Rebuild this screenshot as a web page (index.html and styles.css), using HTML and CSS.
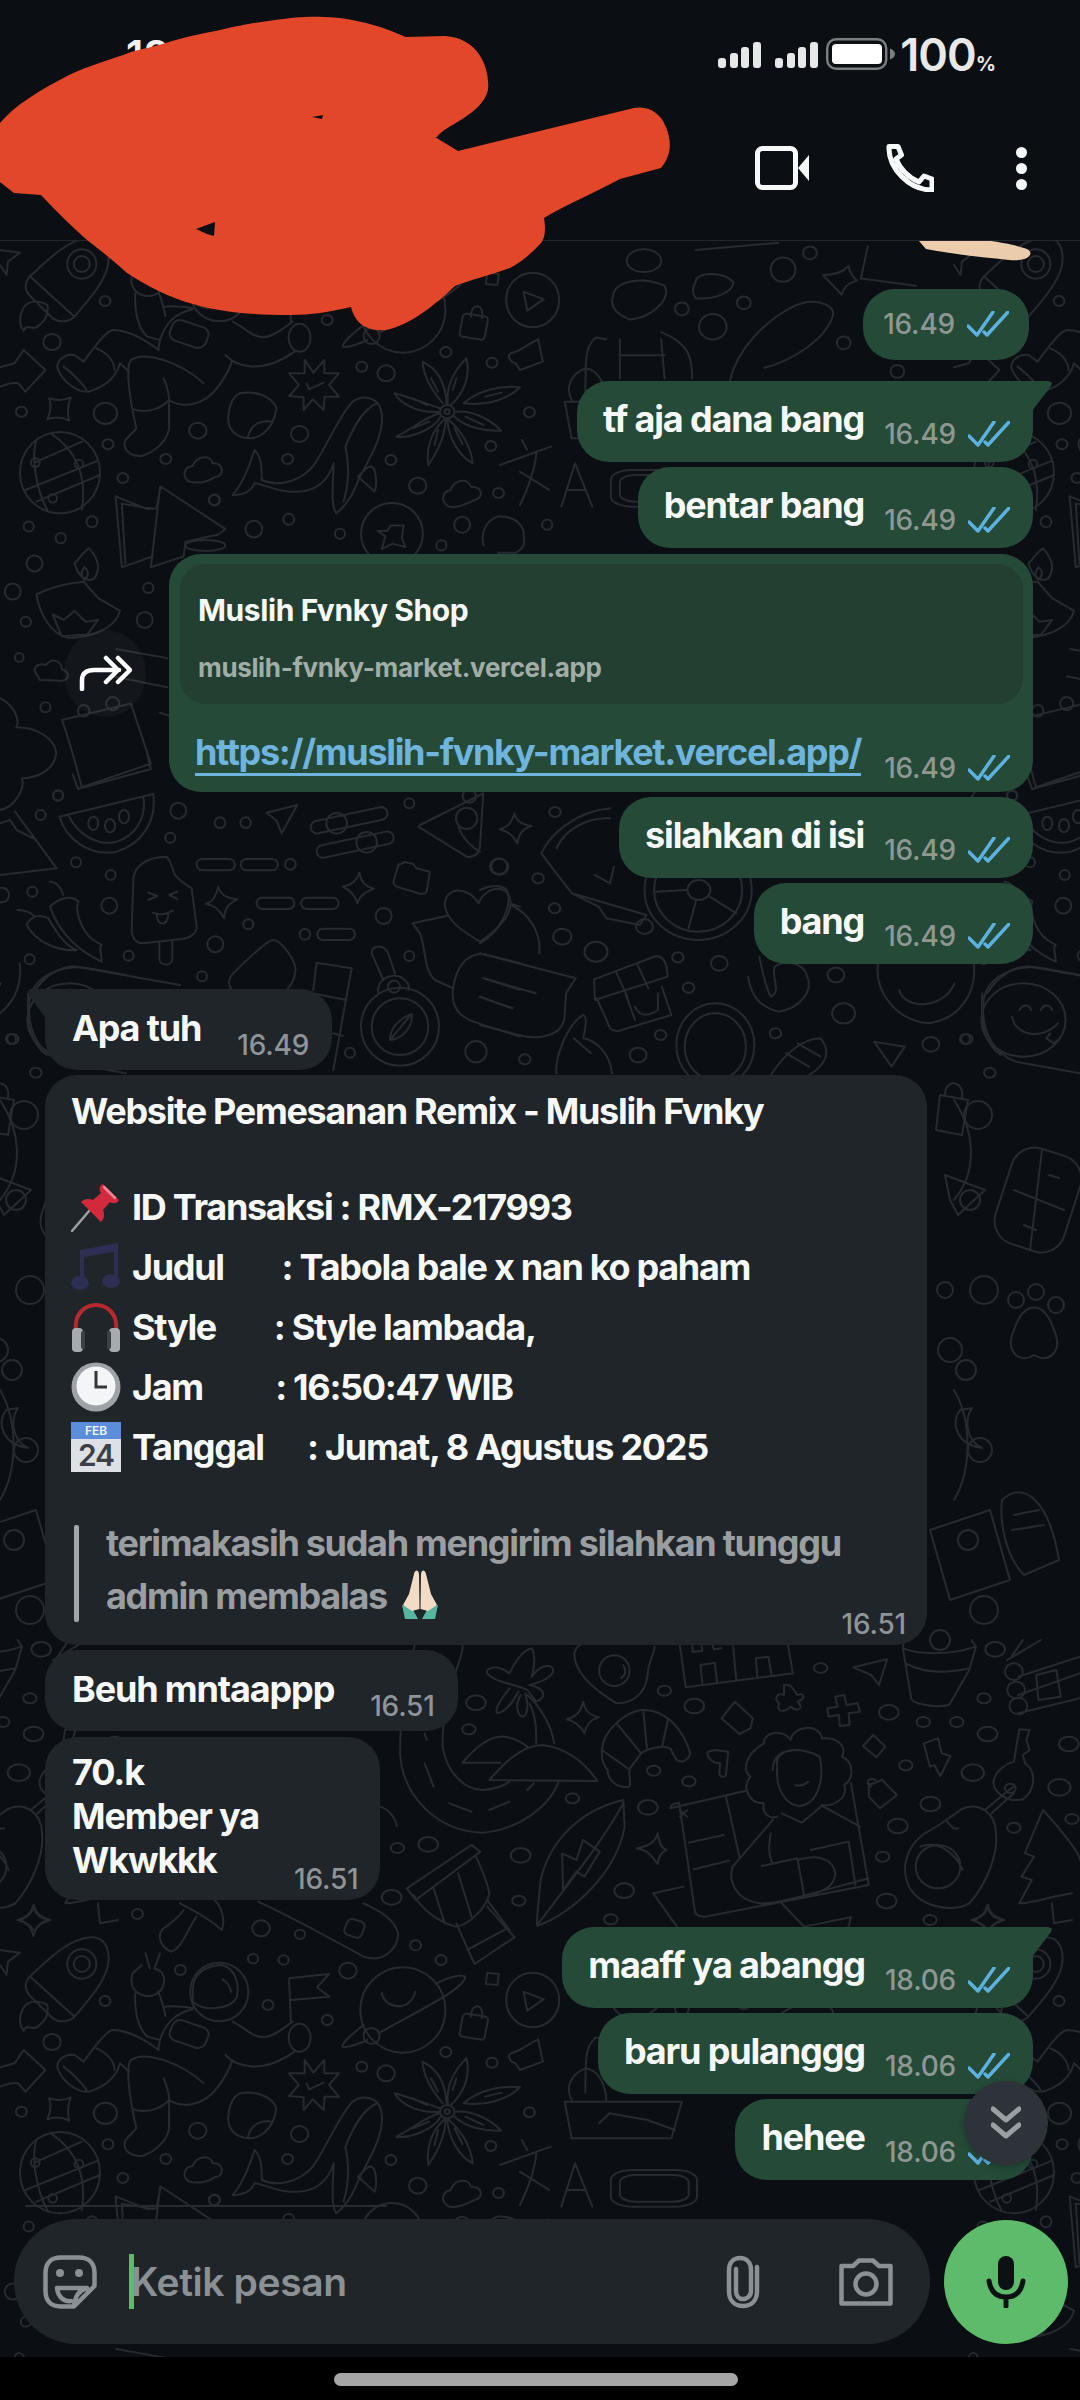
FILE: index.html
```html
<!DOCTYPE html>
<html lang="id">
<head>
<meta charset="utf-8">
<title>Chat</title>
<link rel="stylesheet" href="styles.css">
</head>
<body>
<div class="screen">
  <svg class="doodles" viewBox="0 0 1080 2400" width="1080" height="2400" aria-hidden="true">
    <defs>
      <g id="tile">
        <!-- astronaut field -->
        <g transform="translate(0,190) scale(.3636,.3333)">
          <path d="M80 262C130 210 190 145 250 142C295 140 305 190 295 235C280 290 235 340 205 380C190 395 165 400 145 385L80 315C65 295 70 275 80 262ZM85 262L205 380M130 345C100 325 70 335 62 360C50 385 55 410 65 422C75 400 85 420 100 412C125 395 135 375 130 345Z"/>
          <ellipse cx="225" cy="222" rx="40" ry="44"/><ellipse cx="225" cy="222" rx="22" ry="24"/>
          <ellipse cx="603" cy="306" rx="80" ry="88"/>
          <path d="M530 300C530 250 570 225 610 225C650 235 660 290 650 325C630 360 560 365 530 335ZM612 268C625 275 632 290 636 305M372 310C370 350 375 410 405 440L440 450M435 305C445 330 450 350 455 378M450 352C470 345 500 350 530 355M365 250C355 280 365 310 400 318C440 320 455 290 450 260C445 235 425 240 425 235L440 190M400 190L412 235M390 225L365 250M435 480L440 450C455 400 480 370 530 358M640 395C670 410 690 440 725 442C755 440 785 410 805 395M620 495C650 530 720 555 810 485M437 480C400 450 350 420 310 420C290 425 260 470 230 515L205 495C180 490 155 510 158 535C170 570 210 610 245 605C290 590 320 560 330 520L355 545M175 530C200 550 235 590 240 605M265 475C300 490 315 520 315 540M360 510C345 530 355 620 375 715L345 750C335 780 360 800 390 798C430 785 460 750 465 715L465 625M360 510C400 480 500 520 560 580M450 565C460 590 465 610 465 630C500 655 560 650 600 590C620 560 630 540 638 515M365 658C400 670 440 660 465 630"/>
          <ellipse cx="824" cy="443" rx="30" ry="42"/>
          <rect x="468" y="400" width="104" height="64" rx="22" transform="rotate(20 520 432)"/>
          <path d="M800 395L795 265L905 252L872 292L905 320L800 330"/>
          <ellipse cx="1108" cy="360" rx="117" ry="128"/>
          <path d="M1050 310C1060 360 1130 365 1142 305M1200 280C1230 262 1275 250 1280 262C1270 295 1210 330 1040 430M1000 405C970 430 940 460 942 470C960 475 990 460 1010 450"/>
          <ellipse cx="1022" cy="438" rx="22" ry="24"/>
          <rect x="1268" y="375" width="70" height="70" rx="10" transform="rotate(10 1303 410)"/>
          <path d="M1295 380C1295 335 1335 340 1325 385"/>
          <ellipse cx="1465" cy="330" rx="73" ry="82"/>
          <path d="M1440 305L1495 328L1450 362ZM1340 248L1372 252L1368 285L1336 282ZM1405 490C1440 480 1445 465 1480 448L1493 515L1430 540L1418 520C1400 515 1395 495 1405 490Z"/>
          <path d="M838 510L862 548L892 510L892 550L932 550L905 585L932 620L893 620L890 660L860 628L835 660L835 622L795 618L822 585L795 550L838 550ZM843 580L850 598L890 578"/>
          <path d="M660 610C700 600 750 620 760 655C755 700 730 740 690 745C650 745 625 720 628 680C630 650 640 620 660 610ZM682 742C690 700 720 690 750 695"/>
          <ellipse cx="1230" cy="665" rx="20" ry="20"/><ellipse cx="1230" cy="665" rx="7" ry="7"/>
          <path d="M1218 640C1190 605 1165 560 1162 515C1200 535 1225 570 1228 640M1232 640C1225 590 1250 540 1283 505C1295 560 1275 610 1240 645M1275 640C1315 600 1380 585 1430 592C1400 625 1340 650 1275 640M1255 665C1300 660 1350 690 1378 722C1330 725 1280 710 1250 680M1235 690C1270 725 1295 770 1300 820C1265 800 1235 750 1230 690M1225 690C1225 740 1200 790 1178 825C1170 770 1190 720 1222 688M1210 670C1170 680 1130 720 1090 740C1130 745 1190 720 1212 680M1210 655C1170 640 1120 620 1085 610C1105 650 1165 670 1205 665M1185 565L1205 605M1255 565L1245 600M1335 620L1380 608M1280 680L1330 705M1250 715L1272 762M1205 720L1195 765M1135 715L1180 695M1135 625L1175 645"/>
          <path d="M640 915C660 890 680 850 700 780C720 800 720 840 720 870C760 890 820 880 860 830C900 770 930 680 970 635C1000 610 1040 625 1048 660C1060 720 1030 780 990 860C975 900 960 940 925 970C910 950 915 890 918 820C900 880 860 910 800 905C760 905 720 880 700 880C690 905 670 915 640 915ZM1035 640C1000 660 975 700 950 770C960 820 960 880 945 935M985 860C1010 830 1020 820 1030 840C1040 880 1030 905 1030 905Z"/>
          <path d="M520 875C500 860 505 830 530 828C540 795 580 795 585 820C615 815 620 860 590 862C565 880 540 880 520 875ZM1235 950C1210 935 1215 905 1240 900C1250 865 1290 865 1295 890C1330 890 1330 925 1305 930C1280 945 1255 955 1235 950Z"/>
          <ellipse cx="165" cy="848" rx="110" ry="122"/>
          <path d="M95 818L225 755M70 900L270 812M100 935L275 855M100 750C85 800 100 900 130 960M140 730C210 780 240 860 225 960"/>
          <ellipse cx="97" cy="818" rx="12" ry="13"/><ellipse cx="217" cy="822" rx="12" ry="13"/><ellipse cx="145" cy="925" rx="12" ry="13"/>
          <path d="M135 625C155 632 175 632 195 622C185 645 185 665 190 692C170 680 150 680 130 688C140 665 142 645 135 625ZM92 45C97 75 110 85 135 90C110 97 98 110 92 138C85 110 75 97 48 90C75 85 87 70 92 45ZM0 532L40 520L65 480L125 540L70 605L50 580C30 575 15 585 0 590M0 180L55 188L22 215L18 255L0 225"/>
          <path d="M1375 825L1515 770M1435 750L1450 780M1475 790C1470 850 1450 900 1430 945M1430 845L1510 900"/>
          <g class="rings">
            <circle cx="378" cy="72" r="15"/><circle cx="718" cy="115" r="24"/><circle cx="825" cy="133" r="14"/><circle cx="1143" cy="166" r="15"/><circle cx="1213" cy="210" r="15"/><circle cx="696" cy="206" r="14"/><circle cx="780" cy="210" r="14"/><circle cx="496" cy="240" r="15"/><circle cx="957" cy="242" r="24"/><circle cx="289" cy="333" r="15"/><circle cx="737" cy="345" r="15"/><circle cx="900" cy="390" r="15"/><circle cx="143" cy="456" r="24"/><circle cx="1226" cy="486" r="15"/><circle cx="995" cy="530" r="15"/><circle cx="1062" cy="550" r="24"/><circle cx="1353" cy="518" r="15"/><circle cx="59" cy="665" r="15"/><circle cx="290" cy="670" r="32"/><circle cx="544" cy="722" r="24"/><circle cx="824" cy="732" r="24"/><circle cx="1456" cy="667" r="15"/><circle cx="297" cy="763" r="15"/><circle cx="456" cy="807" r="15"/><circle cx="791" cy="807" r="15"/><circle cx="1075" cy="810" r="15"/><circle cx="1350" cy="768" r="15"/><circle cx="338" cy="864" r="15"/><circle cx="1149" cy="887" r="24"/><circle cx="1371" cy="909" r="15"/><circle cx="589" cy="930" r="15"/>
          </g>
          <path d="M540 80C510 130 500 175 470 185C440 170 430 135 450 115C470 100 490 85 505 60M495 40C540 65 590 100 610 120C620 90 610 50 590 30M710 35C800 80 900 140 1000 200C1050 220 1095 180 1095 130C1085 90 1050 65 1000 40M1255 100L1305 222L1415 142L1340 50M1285 180L1395 115"/>
          <rect x="950" y="90" width="50" height="50" rx="14" transform="rotate(20 975 115)"/>
        </g>
        <!-- book, lamp, calendar field -->
        <g transform="translate(0,240) scale(.3636)">
          <path d="M318 705L405 740L430 738L442 678L620 795L600 810L510 830L505 870L415 900L440 680M318 705L335 900L420 870M335 725L420 740M335 725L345 890"/>
          <ellipse cx="565" cy="840" rx="55" ry="15"/>
          <circle cx="1078" cy="808" r="85"/>
          <path d="M1075 785L1110 785L1105 820L1115 845L1080 835L1050 850L1060 815L1038 800L1065 800Z"/>
          <path d="M1330 840C1320 800 1340 770 1370 760C1400 760 1430 770 1440 800C1440 830 1450 840 1420 860L1370 860"/>
          <path d="M100 975C130 960 170 945 230 940L270 985L330 1020C320 1060 270 1090 190 1095C140 1085 110 1030 100 975ZM205 890C225 865 240 850 245 848C265 870 280 900 260 930C240 945 215 925 205 890ZM232 900C220 915 225 930 232 935C245 925 245 910 232 900ZM145 1030L175 1045L205 1020L235 1050L270 1045L240 1085L170 1090Z"/>
          <path d="M170 1320L360 1275L415 1440L225 1505C210 1450 190 1370 170 1320ZM200 1470L215 1510L415 1455L405 1415"/>
          <circle cx="230" cy="1295" r="16"/><circle cx="310" cy="1275" r="18"/>
          <path d="M0 1260C40 1280 55 1320 45 1340C100 1340 150 1370 155 1410C150 1460 100 1480 60 1480C70 1510 40 1560 0 1568M95 1185C95 1165 120 1165 125 1170C145 1145 170 1160 170 1180C195 1190 190 1210 170 1212L110 1210Z"/>
          <path d="M320 1125L460 1150M310 1200L460 1230M440 1300L470 1310"/>
          <g class="rings">
            <circle cx="253" cy="775" r="15"/><circle cx="79" cy="788" r="14"/><circle cx="167" cy="820" r="14"/><circle cx="95" cy="890" r="22"/><circle cx="35" cy="967" r="22"/><circle cx="408" cy="957" r="14"/><circle cx="71" cy="1050" r="14"/><circle cx="398" cy="1045" r="22"/><circle cx="53" cy="1148" r="12"/><circle cx="125" cy="1285" r="14"/><circle cx="590" cy="715" r="15"/><circle cx="698" cy="795" r="23"/><circle cx="794" cy="768" r="15"/><circle cx="935" cy="808" r="14"/><circle cx="1271" cy="783" r="22"/><circle cx="1214" cy="840" r="14"/><circle cx="1505" cy="783" r="14"/><circle cx="160" cy="1527" r="14"/>
          </g>
        </g>
        <!-- watermelon, popsicle, compass field -->
        <g transform="translate(0,790) scale(.3333)">
          <path d="M178 80L460 12C470 90 430 160 350 185C270 200 200 150 178 80ZM205 75C230 130 290 170 350 155C410 135 440 80 430 20M45 65L170 235L0 255M0 100L30 90L50 120L100 145"/>
          <ellipse cx="280" cy="100" rx="15" ry="20"/><ellipse cx="330" cy="107" rx="15" ry="20"/><ellipse cx="372" cy="80" rx="15" ry="20"/>
          <path d="M800 68L892 45L845 130L830 92Z"/>
          <rect x="930" y="72" width="235" height="38" rx="19" transform="rotate(-12 1047 91)"/><circle cx="1010" cy="100" r="31"/>
          <rect x="948" y="145" width="235" height="38" rx="19" transform="rotate(-12 1065 164)"/><circle cx="1100" cy="157" r="31"/>
          <path d="M1255 110L1400 200C1430 205 1440 180 1440 170L1450 10L1260 105M1375 110C1390 150 1420 175 1440 185"/>
          <circle cx="1400" cy="85" r="32"/><circle cx="1408" cy="18" r="20"/>
          <path d="M400 270C400 230 440 200 500 200L510 215L525 255L545 275L575 295L590 410C590 430 570 445 540 448L430 460C405 460 395 440 395 420ZM478 458L478 505C480 530 515 530 517 505L517 452M445 308L472 318L445 330M532 305L508 315L532 327M458 368C480 375 495 375 518 362M470 372C470 410 505 410 505 370"/>
          <path d="M150 350C170 330 210 310 235 335C225 360 240 420 280 450L305 465C295 470 305 490 305 515C250 490 180 440 150 350ZM150 275C175 275 185 300 190 315M80 405C90 380 120 370 145 385C170 430 200 470 230 480C180 485 110 460 80 405ZM52 360C80 360 95 370 105 380"/>
          <rect x="590" y="207" width="115" height="34" rx="17"/><rect x="722" y="207" width="112" height="34" rx="17"/><rect x="770" y="323" width="113" height="34" rx="17"/><rect x="903" y="323" width="113" height="34" rx="17"/><rect x="952" y="416" width="113" height="34" rx="17"/>
          <path d="M655 290C660 315 680 325 712 328C685 340 675 355 672 385C660 360 645 345 618 342C640 335 650 315 655 290ZM1078 248C1082 275 1095 290 1122 296C1098 305 1080 315 1072 340C1065 315 1050 300 1028 290C1055 285 1072 270 1078 248Z"/>
          <path d="M1195 225L1215 216L1240 222L1250 235L1290 245L1280 305C1275 313 1265 313 1255 310L1190 290C1180 285 1180 275 1182 270Z"/>
          <path d="M1435 340C1405 285 1330 290 1335 350C1345 400 1400 430 1440 455C1485 425 1535 380 1532 335C1525 280 1460 285 1435 340M1340 378L1238 400L1260 430C1280 480 1270 540 1305 570L1360 595M1535 342L1560 350"/>
          <path d="M820 450C800 450 720 530 695 555C680 575 690 600 705 610M820 450C840 450 880 500 885 530C890 550 880 580 860 600"/>
          <path d="M100 610C130 560 180 525 230 530L540 585M85 610C80 700 90 760 140 795M950 518L1055 535L1000 840M950 518L940 600M1040 630L935 610M1000 730L1030 738"/>
          <circle cx="1200" cy="710" r="117"/><circle cx="1200" cy="710" r="85"/>
          <path d="M1235 672C1190 690 1170 720 1170 750C1210 745 1240 710 1235 672ZM1170 750L1235 672M1135 610C1130 570 1165 550 1200 560C1225 575 1230 590 1225 600M1115 490C1115 465 1150 460 1165 490L1185 550M1115 490L1150 570"/>
          <circle cx="1182" cy="590" r="18"/>
          <path d="M1560 520L1450 492C1400 490 1370 530 1360 590C1350 650 1380 680 1420 695L1560 740M1450 565L1560 600M1438 620L1535 655"/>
          <g class="rings">
            <circle cx="174" cy="17" r="15"/><circle cx="122" cy="75" r="15"/><circle cx="535" cy="62" r="24"/><circle cx="660" cy="98" r="16"/><circle cx="737" cy="98" r="16"/><circle cx="511" cy="143" r="15"/><circle cx="228" cy="217" r="15"/><circle cx="332" cy="255" r="15"/><circle cx="97" cy="305" r="15"/><circle cx="328" cy="347" r="24"/><circle cx="745" cy="403" r="15"/><circle cx="646" cy="463" r="24"/><circle cx="89" cy="508" r="15"/><circle cx="386" cy="497" r="15"/><circle cx="606" cy="559" r="15"/><circle cx="33" cy="747" r="15"/><circle cx="871" cy="223" r="16"/><circle cx="1228" cy="40" r="15"/><circle cx="1151" cy="378" r="24"/><circle cx="1498" cy="229" r="24"/><circle cx="915" cy="433" r="16"/><circle cx="1228" cy="498" r="15"/><circle cx="1050" cy="788" r="15"/><circle cx="1428" cy="785" r="32"/><circle cx="5" cy="315" r="22"/>
          </g>
        </g>
        <!-- wheel, shop, coin field -->
        <g transform="translate(480,790) scale(.3827,.3333)">
          <path d="M90 70C95 95 110 105 135 108C110 115 100 135 98 160C85 135 75 125 52 118C75 110 85 95 90 70Z"/>
          <ellipse cx="570" cy="300" rx="140" ry="150"/><ellipse cx="570" cy="300" rx="115" ry="125"/><ellipse cx="572" cy="300" rx="30" ry="30"/>
          <path d="M545 415L565 330M670 370L600 320M460 305L540 300M160 190L240 310L435 375L418 405L330 385L310 350L240 310M160 190C185 130 250 65 340 55M200 175C220 120 280 80 340 85M300 255L340 280L350 230"/>
          <circle cx="430" cy="410" r="22"/>
          <path d="M0 460C60 420 85 340 70 300C50 280 20 290 0 300M80 345C130 370 160 430 155 490M0 490L250 565L225 610L220 690C210 740 150 750 100 735L0 705M10 565L145 610M0 620L85 655"/>
          <path d="M298 568L460 498C480 500 490 520 490 560L300 630ZM355 545L385 620M410 520L440 595M305 625L340 715C350 725 360 725 370 720L500 675L475 590M380 610L405 690M405 650C415 680 440 680 465 660L465 610"/>
          <path d="M700 560C710 620 730 650 780 665C840 655 870 600 855 560C850 530 810 500 770 530C760 570 790 600 760 620C745 590 735 530 730 500"/>
          <ellipse cx="615" cy="765" rx="102" ry="125"/><ellipse cx="615" cy="770" rx="80" ry="100"/>
          <path d="M200 850C195 800 230 700 270 675C285 680 270 740 270 745C300 750 340 790 345 850M245 745L290 790M760 855C790 800 840 745 890 745C915 780 910 820 860 855M800 790L860 830M830 760L890 800"/>
          <path d="M1030 755L1110 770L1075 830ZM1040 520C1030 610 1090 690 1170 700C1250 690 1300 610 1290 520M1095 600C1110 660 1210 660 1240 580"/>
          <g class="rings">
            <circle cx="196" cy="66" r="15"/><circle cx="50" cy="230" r="24"/><circle cx="152" cy="265" r="15"/><circle cx="195" cy="355" r="15"/><circle cx="215" cy="440" r="24"/><circle cx="303" cy="485" r="30"/><circle cx="517" cy="502" r="15"/><circle cx="625" cy="520" r="22"/><circle cx="545" cy="593" r="15"/><circle cx="930" cy="555" r="22"/><circle cx="950" cy="670" r="30"/><circle cx="472" cy="735" r="15"/><circle cx="772" cy="730" r="15"/><circle cx="117" cy="808" r="15"/><circle cx="1178" cy="763" r="22"/><circle cx="413" cy="795" r="22"/>
          </g>
        </g>
        <!-- smiley that wraps round the tile edge -->
        <g transform="translate(-474,790) scale(.3827,.3333)">
          <path d="M1315 640C1320 560 1400 520 1470 535L1568 555M1315 640C1310 720 1340 790 1400 815L1568 850M1390 680C1400 740 1470 750 1510 700M1410 660C1420 640 1435 645 1440 660M1465 660C1475 640 1490 645 1495 660M1490 730L1480 745L1500 760L1515 745"/>
          <ellipse cx="1420" cy="690" rx="110" ry="110"/>
          <circle cx="1272" cy="747" r="15"/><circle cx="1332" cy="848" r="15"/>
        </g>
        <!-- palm, woman, avocado field -->
        <g transform="translate(380,1640) scale(.4464,.3333)">
          <path d="M330 150C300 130 260 130 240 100C235 85 260 70 290 100C300 70 320 30 340 25C350 50 345 85 340 110C360 70 390 70 388 95C380 120 350 130 335 135C370 145 375 170 350 185L330 150M290 145C275 170 255 205 262 220C285 215 300 180 310 155M315 165C300 200 310 230 322 230C335 215 330 180 325 160M330 165C360 200 385 260 390 310M335 190C350 230 350 270 350 310"/>
          <path d="M185 368C215 320 250 285 280 290C300 295 320 310 330 320M185 368L270 368M245 420C280 365 320 315 365 315C420 325 460 370 487 423Z"/>
          <path d="M45 340C50 470 130 575 230 578C310 570 380 500 400 425M185 15C190 60 140 130 140 320C150 400 190 450 230 450C260 448 280 435 290 425M100 370L120 440M155 490L205 515M245 510L290 485M330 450L345 430M100 280L105 300M45 340C45 200 60 120 80 0"/>
          <path d="M435 40C435 100 480 150 530 190C560 190 595 170 600 100C600 70 615 40 615 20M435 40C440 20 445 15 450 15M545 75C552 90 550 105 540 115"/>
          <ellipse cx="525" cy="92" rx="34" ry="46"/>
          <path d="M455 185C460 215 470 225 490 232C470 240 462 255 458 280C450 260 440 245 418 238C440 230 450 215 455 185Z"/>
          <path d="M585 210C640 205 680 270 695 340C690 365 670 375 660 350L650 325C630 315 600 325 585 340L560 385C555 405 565 430 558 440C530 445 510 420 510 390C490 360 495 310 510 280C530 240 560 215 585 210ZM530 250L585 340M590 215L598 325M645 240L632 320M497 330L555 385"/>
          <path d="M670 0L685 142L925 100L912 0M722 130L718 75L750 68L755 125M845 110L842 55L870 50L877 105M790 0L798 120M700 15L700 35L722 33L720 15M745 15L748 28L765 25"/>
          <path d="M1060 82L1136 58L1118 135L1100 105ZM1172 25C1210 45 1280 45 1335 20M1172 0L1172 30L1190 175C1190 190 1240 205 1275 195L1320 90L1335 20L1325 0M1180 72C1220 100 1270 100 1320 85"/>
          <path d="M1405 60L1480 0M1430 110L1568 50M1430 165L1568 100M1430 220L1568 175M1470 105L1515 90L1525 170L1475 180ZM1415 50L1440 0"/>
          <ellipse cx="1420" cy="95" rx="20" ry="25"/><ellipse cx="1425" cy="150" rx="20" ry="25"/><ellipse cx="1430" cy="198" rx="20" ry="25"/>
          <path d="M905 135C925 130 930 160 935 165C950 155 955 175 935 185C950 200 940 220 920 200C905 220 885 215 895 190C880 180 890 155 905 165ZM1020 170L1040 165L1045 195L1070 190L1075 215L1050 220L1052 255L1030 258L1028 225L1005 230L1002 205L1025 200ZM795 185L835 235L830 265L805 282L765 235ZM1105 285L1132 320L1112 352L1082 318ZM1218 310L1250 295L1258 340L1278 348L1255 408L1242 375L1232 380Z"/>
          <path d="M1432 268L1455 270L1448 300L1455 330L1440 345L1445 370C1470 390 1470 450 1440 478C1400 490 1370 450 1375 420C1380 390 1405 370 1420 365ZM1095 435L1125 420L1158 465L1120 505L1095 470ZM1100 440C1085 430 1095 410 1110 420M750 330L780 335L775 405C770 415 760 410 760 400L762 370C740 370 730 345 735 335Z"/>
          <path d="M860 310C860 275 900 265 920 300C925 255 985 250 990 295C1030 290 1045 325 1035 350C1065 370 1060 420 1040 435C1050 480 1010 500 990 495M860 310C820 340 810 390 830 410C810 440 825 490 860 490C855 515 870 540 890 530M890 380C880 320 950 320 985 350C995 410 985 490 940 498C910 495 885 450 890 380ZM880 390C880 350 900 330 935 330M930 435C940 440 950 435 960 425"/>
          <path d="M650 505L820 452M650 505C650 495 660 490 670 488L705 810C705 825 715 830 730 830L1095 735L1055 430M775 470L805 650M692 608L770 585M703 688L782 662M672 510L688 530M688 510L672 530M880 540L790 680C780 720 795 780 850 790C880 795 940 770 1095 715M900 520L945 548L990 497L1075 560M855 678L935 655L950 765M965 630L1050 605L1065 735M935 660C985 640 1015 660 1020 700C1020 730 1000 760 945 768M875 580C870 620 870 650 880 670M612 760L680 740M612 760L665 860M900 790L950 860L1055 832L1050 860"/>
          <path d="M545 480C450 510 380 600 360 720C355 790 350 840 352 858C430 820 530 700 548 560ZM545 490C500 600 440 700 355 850M408 640L440 660L455 600L492 635L458 710L440 695L410 750ZM622 580C625 610 630 625 642 630C625 640 625 655 622 672C610 650 600 630 575 625C600 620 618 605 622 580Z"/>
          <path d="M1300 510C1340 480 1380 520 1380 580C1385 640 1360 730 1320 790C1280 820 1210 800 1185 740C1165 680 1180 620 1220 580C1250 560 1270 540 1300 510ZM1210 620C1250 600 1290 640 1305 690M1270 545C1280 560 1285 570 1295 565M1355 510L1400 460L1420 440M1370 520L1420 460"/>
          <ellipse cx="1250" cy="680" rx="50" ry="65"/><ellipse cx="1412" cy="445" rx="12" ry="14"/>
          <path d="M1485 510C1520 560 1568 640 1568 660M1485 510C1470 560 1450 620 1445 640L1465 650L1437 710L1460 720L1432 790C1460 790 1500 770 1550 760M1505 790L1510 850L1550 840M1362 795C1365 820 1375 830 1398 840C1380 850 1370 855 1365 870M1362 795C1358 820 1350 830 1330 840C1345 850 1355 855 1360 870"/>
          <path d="M60 745L205 615L225 635L80 780ZM75 765C100 820 140 850 170 860C200 855 240 800 245 760C240 720 225 680 215 650M120 745L145 850M175 700L205 830M240 780L290 870M0 500C25 510 35 540 38 558"/>
          <g class="rings">
            <circle cx="215" cy="188" r="22"/><circle cx="637" cy="152" r="15"/><circle cx="704" cy="198" r="22"/><circle cx="987" cy="84" r="15"/><circle cx="1140" cy="217" r="22"/><circle cx="1378" cy="28" r="22"/><circle cx="1353" cy="175" r="15"/><circle cx="1217" cy="246" r="15"/><circle cx="1292" cy="246" r="15"/><circle cx="1361" cy="282" r="22"/><circle cx="1543" cy="312" r="22"/><circle cx="199" cy="268" r="15"/><circle cx="613" cy="392" r="15"/><circle cx="692" cy="424" r="15"/><circle cx="431" cy="475" r="15"/><circle cx="600" cy="502" r="22"/><circle cx="1178" cy="376" r="15"/><circle cx="1328" cy="398" r="25"/><circle cx="1522" cy="442" r="25"/><circle cx="1233" cy="492" r="22"/><circle cx="1420" cy="563" r="15"/><circle cx="1160" cy="558" r="22"/><circle cx="1126" cy="650" r="15"/><circle cx="39" cy="624" r="15"/><circle cx="108" cy="613" r="22"/><circle cx="315" cy="646" r="22"/><circle cx="311" cy="782" r="15"/><circle cx="26" cy="772" r="22"/><circle cx="547" cy="752" r="22"/><circle cx="517" cy="838" r="15"/><circle cx="1135" cy="783" r="22"/><circle cx="1550" cy="537" r="15"/><circle cx="1232" cy="840" r="15"/>
          </g>
        </g>
        <!-- woman, koi and cactus between the bubbles -->
        <g transform="scale(.6887,.3571)">
          <path d="M890 830C890 790 930 770 965 800C975 840 945 890 915 895C895 880 885 860 890 830ZM880 950L865 945C850 970 850 1000 850 1100M900 950L900 1060M960 950L965 1060M900 995L965 995M960 930C1000 960 1005 1000 1005 1060"/>
          <ellipse cx="935" cy="730" rx="25" ry="32"/>
          <path d="M1060 1065C1070 980 1110 900 1150 860C1180 830 1210 850 1210 880C1200 950 1150 1010 1110 1030M1195 770C1215 770 1225 760 1232 745C1235 770 1240 780 1245 785C1230 795 1225 805 1222 825C1210 800 1205 790 1195 770ZM1010 790C1010 760 1050 760 1065 790C1065 820 1035 840 1010 835C1005 820 1005 805 1010 790ZM1010 700L1130 680M1260 690L1250 780L1330 800"/>
          <ellipse cx="1137" cy="755" rx="18" ry="34"/><ellipse cx="1176" cy="708" rx="10" ry="18"/><ellipse cx="1080" cy="848" rx="10" ry="18"/><ellipse cx="1035" cy="915" rx="20" ry="36"/><ellipse cx="990" cy="865" rx="10" ry="18"/><ellipse cx="1225" cy="960" rx="10" ry="18"/><ellipse cx="1303" cy="1040" rx="10" ry="18"/>
        </g>
        <g transform="translate(0,200) scale(.6887,.3333)">
          <path d="M815 920L835 790L860 920M825 870L850 870M820 605L990 605L975 715L830 715ZM870 670L885 640L940 660L980 690M830 600C820 560 830 520 850 505C870 510 880 560 880 600"/>
          <rect x="887" y="810" width="125" height="110" rx="30"/>
          <rect x="900" y="825" width="100" height="80" rx="22"/>
        </g>
        <!-- right strip of the tile, seen past the right edge -->
        <g>
          <rect x="48" y="1150" width="72" height="100" rx="24" transform="rotate(18 84 1200)"/>
          <path d="M60 1190L110 1210M88 1150L76 1250M95 1175L105 1178M70 1225L82 1230"/>
          <path d="M60 1330C70 1300 90 1300 100 1330C110 1350 95 1365 80 1355C65 1365 50 1350 60 1330Z"/>
          <circle cx="62" cy="1300" r="8"/><circle cx="82" cy="1292" r="8"/><circle cx="102" cy="1305" r="8"/>
          <path d="M48 1500C70 1480 95 1500 105 1560L70 1575C55 1560 45 1530 48 1500ZM60 1515L85 1510M58 1530L90 1525"/>
          <circle cx="24" cy="1115" r="14"/><circle cx="16" cy="1200" r="10"/><circle cx="30" cy="1290" r="14"/><circle cx="12" cy="1370" r="10"/><circle cx="26" cy="1450" r="12"/><circle cx="14" cy="1540" r="10"/><circle cx="30" cy="1610" r="14"/>
          <path d="M0 1100C20 1130 25 1170 0 1200M0 1390C18 1420 18 1470 0 1500"/>
          <path d="M940 1095L968 1100L962 1135L936 1130ZM945 1095C945 1078 965 1080 962 1098M945 1175L985 1190L958 1215L950 1200ZM960 1410C950 1425 958 1445 982 1448C966 1440 964 1420 972 1408ZM930 1530L990 1510L1010 1580L950 1600Z"/>
          <circle cx="945" cy="1290" r="8"/><circle cx="950" cy="1350" r="12"/><circle cx="940" cy="1640" r="10"/>
        </g>
      </g>
    </defs>
    <use href="#tile"/>
    <use href="#tile" x="954"/>
    <use href="#tile" x="-954"/>
    <use href="#tile" y="1700"/>
    <use href="#tile" x="954" y="1700"/>
    <use href="#tile" x="-954" y="1700"/>
    <path d="M26 2206H386"/>
  </svg>

  <header class="topbar">
    <div class="status">
      <span class="clock">18.06</span>
      <div class="status-right">
        <svg class="signal" viewBox="0 0 43 26" width="43" height="26"><rect x="0" y="16" width="8" height="10" rx="3"/><rect x="12" y="11" width="8" height="15" rx="3"/><rect x="23" y="5" width="8" height="21" rx="3"/><rect x="35" y="0" width="8" height="26" rx="3"/></svg>
        <svg class="signal second" viewBox="0 0 43 26" width="43" height="26"><rect x="0" y="16" width="8" height="10" rx="3"/><rect x="12" y="11" width="8" height="15" rx="3"/><rect x="23" y="5" width="8" height="21" rx="3"/><rect x="35" y="0" width="8" height="26" rx="3"/></svg>
        <svg class="battery" viewBox="0 0 70 32" width="70" height="32"><rect class="battery-shell" x="1.2" y="1.2" width="59" height="29.6" rx="9"/><rect class="battery-fill" x="6" y="6" width="50" height="20" rx="4"/><path class="battery-nub" d="M64 10.5c3 1 5 3 5 5.500s-2 4.500-5 5.500z"/></svg>
        <span class="level">100<small>%</small></span>
      </div>
    </div>
    <div class="appbar">
      <svg class="ic-video" viewBox="0 0 54 44" width="54" height="44"><rect class="white-line" x="2.500" y="2.500" width="38" height="39" rx="5"/><path class="white-fill" d="M43 22L54 9V35Z"/></svg>
      <svg class="ic-phone" viewBox="0 0 48 48" width="48" height="48"><path class="white-line" d="M3 2.500H12L15.500 11L10 15C14 25 23 34 33 38L38 32L46 35V46C24 46 2 25 3 2.500Z"/></svg>
      <svg class="ic-dots" viewBox="0 0 11 43" width="11" height="43"><circle cx="5.500" cy="5.500" r="5.500"/><circle cx="5.500" cy="21.500" r="5.500"/><circle cx="5.500" cy="37.500" r="5.500"/></svg>
    </div>
  </header>

  <main class="chat">
    <div class="messages">
      <div class="sticker-tail">
        <svg viewBox="0 0 115 20" width="115" height="20"><path d="M0 0L7 8C32 13 62 16 90 19C110 21 116 12 108 8C92 3 85 2 72 0Z"/></svg>
      </div>
      <div class="bubble out caption"><div class="meta"><span class="time">16.49</span><svg class="ticks" viewBox="0 0 42 26" width="42" height="26"><path d="M1 15L10 24L26 1M17 21L20 24L41 1"/></svg></div></div>
      <div class="bubble out tail gap-md"><span class="text">tf aja dana bang</span><div class="meta"><span class="time">16.49</span><svg class="ticks" viewBox="0 0 42 26" width="42" height="26"><path d="M1 15L10 24L26 1M17 21L20 24L41 1"/></svg></div></div>
      <div class="bubble out"><span class="text">bentar bang</span><div class="meta"><span class="time">16.49</span><svg class="ticks" viewBox="0 0 42 26" width="42" height="26"><path d="M1 15L10 24L26 1M17 21L20 24L41 1"/></svg></div></div>
      <div class="link-row">
        <div class="forward"><svg viewBox="0 0 53 36" width="53" height="36"><path d="M3 34V25C3 18 8 15 15 15H40M27 3L39 15L27 27M39 3L51 15L39 27"/></svg></div>
        <div class="link-bubble">
          <div class="preview">
            <div class="preview-title">Muslih Fvnky Shop</div>
            <div class="preview-domain">muslih-fvnky-market.vercel.app</div>
          </div>
          <div class="link-line">
            <span class="url">https://muslih-fvnky-market.vercel.app/</span>
            <div class="meta"><span class="time">16.49</span><svg class="ticks" viewBox="0 0 42 26" width="42" height="26"><path d="M1 15L10 24L26 1M17 21L20 24L41 1"/></svg></div>
          </div>
        </div>
      </div>
      <div class="bubble out"><span class="text">silahkan di isi</span><div class="meta"><span class="time">16.49</span><svg class="ticks" viewBox="0 0 42 26" width="42" height="26"><path d="M1 15L10 24L26 1M17 21L20 24L41 1"/></svg></div></div>
      <div class="bubble out"><span class="text">bang</span><div class="meta"><span class="time">16.49</span><svg class="ticks" viewBox="0 0 42 26" width="42" height="26"><path d="M1 15L10 24L26 1M17 21L20 24L41 1"/></svg></div></div>

      <div class="bubble in tail gap-lg"><span class="text">Apa tuh</span><div class="meta"><span class="time">16.49</span></div></div>

      <div class="order">
        <div class="order-title">Website Pemesanan Remix - Muslih Fvnky</div>
        <div class="order-rows">
          <div class="order-row">
            <svg class="emoji" viewBox="0 0 50 50" width="50" height="50"><path class="pin-needle" d="M1 49L24 22"/><path class="pin-body" d="M32 2C28 4 28 8 30 11L22 18C17 16 13 17 10 20L30 40C33 37 34 33 32 28L39 20C42 22 46 22 48 18Z"/><path class="pin-shine" d="M33 5L44 16"/></svg>
            <span>ID Transaksi : RMX-217993</span>
          </div>
          <div class="order-row">
            <svg class="emoji" viewBox="0 0 50 50" width="50" height="50"><path class="note-fill" d="M9 8L47 1V9L13 15V40H9ZM43 8H47V40H43Z"/><ellipse class="note-fill" cx="9" cy="41" rx="9" ry="7"/><ellipse class="note-fill" cx="40" cy="39" rx="9" ry="7"/></svg>
            <span>Judul        : Tabola bale x nan ko paham</span>
          </div>
          <div class="order-row">
            <svg class="emoji" viewBox="0 0 50 50" width="50" height="50"><path class="phones-band" d="M5 28C3 13 13 3 25 3C37 3 47 13 45 28"/><rect class="phones-cup" x="1" y="26" width="11" height="24" rx="4"/><rect class="phones-cup" x="38" y="26" width="11" height="24" rx="4"/><rect class="phones-pad" x="10" y="29" width="4" height="18" rx="2"/><rect class="phones-pad" x="36" y="29" width="4" height="18" rx="2"/></svg>
            <span>Style        : Style lambada,</span>
          </div>
          <div class="order-row">
            <svg class="emoji" viewBox="0 0 50 50" width="50" height="50"><circle class="clock-rim" cx="25" cy="25" r="24.500"/><circle class="clock-face" cx="25" cy="24" r="19.500"/><path class="clock-hands" d="M25 9V25H36"/></svg>
            <span>Jam          : 16:50:47 WIB</span>
          </div>
          <div class="order-row">
            <span class="calendar"><span class="cal-month">FEB</span><span class="cal-day">24</span></span>
            <span>Tanggal      : Jumat, 8 Agustus 2025</span>
          </div>
        </div>
        <blockquote class="quote">terimakasih sudah mengirim silahkan tunggu<br>admin membalas <svg class="pray" viewBox="0 0 38 50" width="38" height="50"><path class="pray-sleeve" d="M1 36L11 39L17 50H4ZM37 36L27 39L21 50H34Z"/><path class="pray-hand" d="M18.500 40L18 5C17 0 14 1 13 5L8 25L2 36L11 42ZM19.500 40L20 5C21 0 24 1 25 5L30 25L36 36L27 42Z"/></svg></blockquote>
        <div class="order-time"><span class="time">16.51</span></div>
      </div>

      <div class="bubble in"><span class="text">Beuh mntaappp</span><div class="meta"><span class="time">16.51</span></div></div>
      <div class="bubble in multi"><span class="text">70.k<br>Member ya<br>Wkwkkk</span><div class="meta"><span class="time">16.51</span></div></div>

      <div class="bubble out tail gap-xl"><span class="text">maaff ya abangg</span><div class="meta"><span class="time">18.06</span><svg class="ticks" viewBox="0 0 42 26" width="42" height="26"><path d="M1 15L10 24L26 1M17 21L20 24L41 1"/></svg></div></div>
      <div class="bubble out"><span class="text">baru pulanggg</span><div class="meta"><span class="time">18.06</span><svg class="ticks" viewBox="0 0 42 26" width="42" height="26"><path d="M1 15L10 24L26 1M17 21L20 24L41 1"/></svg></div></div>
      <div class="bubble out"><span class="text">hehee</span><div class="meta"><span class="time">18.06</span><svg class="ticks" viewBox="0 0 42 26" width="42" height="26"><path d="M1 15L10 24L26 1M17 21L20 24L41 1"/></svg></div></div>

      <div class="scroll-down"><svg viewBox="0 0 30 34" width="30" height="34"><path d="M2 3L15 14L28 3M2 19L15 30L28 19"/></svg></div>
    </div>

    <div class="composer">
      <div class="input">
        <svg class="ic-sticker" viewBox="0 0 54 54" width="54" height="54"><path d="M18 2.500H36C46 2.500 51.500 8 51.500 18V31L31 51.500H18C8 51.500 2.500 46 2.500 36V18C2.500 8 8 2.500 18 2.500ZM14 33H44C36 35 32 41 31 51M14 33C15 42 21 47 28 46"/><circle class="sticker-eye" cx="17" cy="18" r="4"/><circle class="sticker-eye" cx="36" cy="18" r="4"/></svg>
        <span class="caret"></span>
        <span class="placeholder">Ketik pesan</span>
        <svg class="ic-clip" viewBox="0 0 34 54" width="34" height="54"><path d="M31 12V36C31 46 25 51 17 51C9 51 3 46 3 36V15C3 7 8 3 14 3C20 3 25 7 25 15V36C25 41 21 44 17 44C13 44 10 41 10 36V14"/></svg>
        <svg class="ic-camera" viewBox="0 0 54 48" width="54" height="48"><path d="M2.500 8H14L20 2.500H34L40 8H51.500V45.500H2.500Z"/><circle cx="27" cy="26" r="10.500"/></svg>
      </div>
      <div class="mic"><svg viewBox="0 0 40 52" width="40" height="52"><rect class="mic-head" x="12" y="0" width="16" height="34" rx="8"/><path class="mic-arc" d="M3 25C5 37 12 41 20 41C28 41 35 37 37 25M20 41V50"/></svg></div>
    </div>
  </main>

  <footer class="nav"><span class="home"></span></footer>

  <svg class="scribble" viewBox="0 0 680 340" width="680" height="340" aria-hidden="true">
    <path class="scribble-fill" d="M0 123C15 105 40 90 69 75C90 65 110 60 131 52C150 47 160 45 172 41C190 36 205 33 220 30C245 24 260 22 275 20C295 17 310 16 324 17C360 18 390 30 406 37L445 36C480 38 490 70 488 90C482 115 445 125 437 137L435 137L458 151L634 108C650 105 661 115 665 125C672 140 672 155 661 168L620 179C590 195 565 205 544 218C546 230 545 238 541 243C530 255 520 263 510 268C490 275 470 280 455 286C435 305 410 325 386 330C365 332 355 322 351 307C330 312 310 315 291 315C250 315 220 312 193 304C170 298 145 285 127 273C115 262 100 250 87 240C70 225 55 210 41 195L14 193L0 182Z"/>
    <path class="scribble-hole" d="M207 234L196 229L215 222L214 236ZM312 117L323 115L322 119Z"/>
  </svg>
</div>
</body>
</html>
```

FILE: styles.css
```css
* { box-sizing: border-box; }

html, body {
  margin: 0;
  padding: 0;
  background: #000;
}

body {
  font-family: Inter, "Noto Sans", "Liberation Sans", sans-serif;
  color: #f6f8f7;
}

.screen {
  position: relative;
  width: 1080px;
  height: 2400px;
  overflow: hidden;
  display: flex;
  flex-direction: column;
  background: #0b0f14;
}

/* wallpaper */
.doodles {
  position: absolute;
  top: 0;
  left: 0;
}
.doodles * {
  fill: none;
  stroke: #272b30;
  stroke-width: 2;
  stroke-linecap: round;
  stroke-linejoin: round;
  vector-effect: non-scaling-stroke;
}

/* header */
.topbar {
  position: relative;
  height: 241px;
  flex: none;
  background: #0b0f14;
  border-bottom: 1px solid #23272b;
}
.status {
  display: flex;
  justify-content: space-between;
  align-items: flex-start;
  height: 137px;
  padding: 30px 84px 0 126px;
}
.clock {
  font-size: 41px;
  font-weight: 600;
  line-height: 50px;
  color: #f2f2f2;
}
.status-right {
  display: flex;
  align-items: flex-start;
}
.signal { margin-top: 12px; margin-right: 14px; }
.signal rect { fill: #e6e7e7; }
.signal.second { margin-right: 8px; }
.battery { margin-top: 8px; margin-right: 4px; }
.battery-shell { fill: none; stroke: #7b7e80; stroke-width: 2.4; }
.battery-fill { fill: #fff; }
.battery-nub { fill: #7b7e80; }
.level {
  font-size: 45px;
  font-weight: 600;
  line-height: 50px;
  letter-spacing: -1px;
  color: #e8e8e8;
}
.level small {
  font-size: 20px;
  font-weight: 700;
  letter-spacing: 0;
}
.appbar {
  display: flex;
  align-items: center;
  justify-content: flex-end;
  height: 62px;
  padding-right: 53px;
}
.white-line { fill: none; stroke: #f7f8fa; stroke-width: 5; stroke-linejoin: round; }
.white-fill { fill: #f7f8fa; }
.ic-video { margin-right: 77px; }
.ic-phone { margin-right: 82px; }
.ic-dots circle { fill: #f7f8fa; }

/* chat */
.chat {
  position: relative;
  flex: 1;
  display: flex;
  flex-direction: column;
}
.messages {
  position: relative;
  flex: 1;
  display: flex;
  flex-direction: column;
  gap: 5px;
  padding: 0 47px 0 45px;
}
.sticker-tail {
  height: 43px;
  display: flex;
  justify-content: flex-end;
  margin-right: -1px;
}
.sticker-tail svg { display: block; }
.sticker-tail path { fill: #ebcdae; }

.bubble {
  position: relative;
  display: flex;
  align-items: flex-end;
  width: max-content;
  border-radius: 32px;
}
.bubble.out {
  align-self: flex-end;
  gap: 20px;
  padding: 16px 23px 13px 26px;
  background: #254a38;
}
.bubble.in {
  align-self: flex-start;
  gap: 36px;
  padding: 17px 23px 10px 27px;
  background: #202529;
}
.text {
  font-size: 36px;
  font-weight: 700;
  line-height: 44px;
  letter-spacing: -1.15px;
  margin-bottom: 8px;
  color: #f6f8f7;
}
.bubble.in .text { margin-bottom: 10px; }
.bubble.caption {
  margin-right: 4px;
  padding: 20px 20px 21px 20px;
}
.bubble.multi {
  gap: 35px;
  padding: 13px 21px 18px 27px;
  margin-top: 1px;
}
.bubble.multi .text { margin-bottom: 0; }
.bubble.multi .meta { margin-bottom: -12px; }

.meta {
  display: flex;
  align-items: center;
  gap: 12px;
  height: 30px;
  flex: none;
}
.time {
  font-size: 28px;
  font-weight: 500;
  line-height: 30px;
  letter-spacing: -.2px;
  color: #8e9792;
}
.bubble.in .time, .order-time .time { color: #8f9498; }
.ticks {
  fill: none;
  stroke: #5cb1dd;
  stroke-width: 3.5;
  stroke-linecap: round;
  stroke-linejoin: round;
}

.gap-md { margin-top: 16px; }
.gap-lg { margin-top: 20px; }
.gap-xl { margin-top: 22px; }

.tail.out { border-top-right-radius: 0; }
.tail.out::after {
  content: "";
  position: absolute;
  top: 0;
  right: -19px;
  width: 20px;
  height: 30px;
  background: #254a38;
  clip-path: polygon(0 0, 82% 0, 100% 6%, 96% 16%, 0 100%);
}
.tail.in { border-top-left-radius: 0; }
.tail.in::before {
  content: "";
  position: absolute;
  top: 0;
  left: -17px;
  width: 18px;
  height: 30px;
  background: #202529;
  clip-path: polygon(100% 0, 12% 0, 0 8%, 4% 18%, 100% 100%);
}

/* link message */
.link-row {
  display: flex;
  align-items: center;
  justify-content: flex-end;
  gap: 23px;
  margin-top: 1px;
}
.forward {
  width: 82px;
  height: 87px;
  border-radius: 50%;
  background: rgba(255, 255, 255, .035);
  display: flex;
  align-items: center;
  justify-content: center;
  flex: none;
}
.forward svg {
  fill: none;
  stroke: #fff;
  stroke-width: 4.500;
  stroke-linecap: round;
  stroke-linejoin: round;
}
.link-bubble {
  width: 864px;
  padding: 10px 23px 16px 11px;
  border-radius: 32px;
  background: #254a38;
}
.preview {
  height: 140px;
  margin-right: -13px;
  padding: 26px 18px 0;
  border-radius: 26px;
  background: #233f31;
}
.preview-title {
  font-size: 30px;
  font-weight: 700;
  line-height: 40px;
  letter-spacing: -.4px;
  color: #f6f8f7;
}
.preview-domain {
  margin-top: 20px;
  font-size: 26px;
  font-weight: 700;
  line-height: 36px;
  letter-spacing: -.35px;
  color: #a0aea7;
}
.link-line {
  display: flex;
  align-items: flex-end;
  justify-content: space-between;
  margin-top: 28px;
  padding-left: 15px;
}
.url {
  flex: none;
  font-size: 36px;
  font-weight: 700;
  line-height: 41px;
  letter-spacing: -1.32px;
  color: #6fb4dc;
  border-bottom: 3px solid #6fb4dc;
}
.link-line .meta { margin-bottom: -7px; }

/* order message */
.order {
  align-self: flex-start;
  width: 882px;
  padding: 14px 21px 6px 26px;
  border-radius: 32px;
  background: #202529;
}
.order-title, .order-row {
  font-size: 36px;
  font-weight: 700;
  letter-spacing: -1.3px;
  color: #f6f8f7;
}
.order-title { line-height: 44px; }
.order-rows {
  display: flex;
  flex-direction: column;
  margin-top: 44px;
}
.order-row {
  display: flex;
  align-items: center;
  gap: 11px;
  height: 60px;
  white-space: pre;
}
.emoji { flex: none; }
.pin-needle { fill: none; stroke: #9aa0a6; stroke-width: 2.500; stroke-linecap: round; }
.pin-body { fill: #d3293d; }
.pin-shine { fill: none; stroke: #f08a94; stroke-width: 2.500; stroke-linecap: round; }
.note-fill { fill: #2c2e52; }
.phones-band { fill: none; stroke: #b8282f; stroke-width: 4; }
.phones-cup { fill: #a7abb0; }
.phones-pad { fill: #3c4046; }
.clock-rim { fill: #9fa3a8; }
.clock-face { fill: #f4f5f6; }
.clock-hands { fill: none; stroke: #33373c; stroke-width: 3; }
.calendar {
  flex: none;
  width: 50px;
  height: 50px;
  display: flex;
  flex-direction: column;
  align-items: center;
  background: #dde0e4;
}
.cal-month {
  width: 100%;
  height: 17px;
  text-align: center;
  font-size: 12px;
  font-weight: 600;
  line-height: 18px;
  letter-spacing: 0;
  color: #f1f5fb;
  background: #5b8ddb;
}
.cal-day {
  font-size: 30px;
  font-weight: 600;
  line-height: 33px;
  letter-spacing: -1px;
  color: #3c4046;
}
.quote {
  position: relative;
  margin: 41px 0 0 3px;
  padding-left: 32px;
  font-size: 36px;
  font-weight: 700;
  line-height: 51px;
  letter-spacing: -1.3px;
  color: #9a9ea1;
}
.quote::before {
  content: "";
  position: absolute;
  left: 0;
  top: 7px;
  bottom: 0;
  width: 5px;
  background: #a3a6a9;
  border-radius: 2px;
}
.pray { vertical-align: -10px; margin-left: 7px; }
.pray-hand { fill: #f2dcc6; }
.pray-sleeve { fill: #55b5a0; }
.order-time {
  display: flex;
  justify-content: flex-end;
  margin-top: -13px;
}

/* scroll to bottom */
.scroll-down {
  position: absolute;
  top: 1840px;
  left: 964px;
  width: 84px;
  height: 84px;
  border-radius: 50%;
  background: #2d3339;
  display: flex;
  align-items: center;
  justify-content: center;
  box-shadow: 0 2px 6px rgba(0, 0, 0, .25);
}
.scroll-down svg {
  fill: none;
  stroke: #9a9fa3;
  stroke-width: 5;
  stroke-linecap: round;
  stroke-linejoin: round;
}

/* composer */
.composer {
  display: flex;
  align-items: center;
  gap: 14px;
  padding: 0 12px 13px 14px;
}
.input {
  flex: 1;
  height: 125px;
  display: flex;
  align-items: center;
  padding: 0 37px 0 29px;
  border-radius: 62px;
  background: #202529;
}
.ic-sticker, .ic-clip, .ic-camera {
  flex: none;
  fill: none;
  stroke: #8b9094;
  stroke-width: 4.500;
  stroke-linejoin: round;
  stroke-linecap: round;
}
.sticker-eye { fill: #8b9094; stroke: none; }
.caret {
  flex: none;
  width: 5px;
  height: 55px;
  margin-left: 32px;
  margin-right: -3px;
  background: #5dbb6b;
}
.placeholder {
  flex: 1;
  font-size: 39px;
  font-weight: 600;
  letter-spacing: -.4px;
  color: #8b9094;
}
.ic-clip { margin-right: 79px; }
.mic {
  flex: none;
  width: 124px;
  height: 124px;
  border-radius: 50%;
  background: #5dbb6b;
  display: flex;
  align-items: center;
  justify-content: center;
}
.mic-head { fill: #0c1214; }
.mic-arc {
  fill: none;
  stroke: #0c1214;
  stroke-width: 5;
  stroke-linecap: round;
}

/* system nav */
.nav {
  position: relative;
  flex: none;
  height: 43px;
  background: #000;
  display: flex;
  justify-content: center;
  padding: 16px 8px 0 0;
}
.home {
  width: 404px;
  height: 13px;
  border-radius: 7px;
  background: #a6a6a6;
}

/* hand-drawn cover */
.scribble {
  position: absolute;
  top: 0;
  left: 0;
}
.scribble-fill { fill: #e2472a; }
.scribble-hole { fill: #0b0f14; }
```
